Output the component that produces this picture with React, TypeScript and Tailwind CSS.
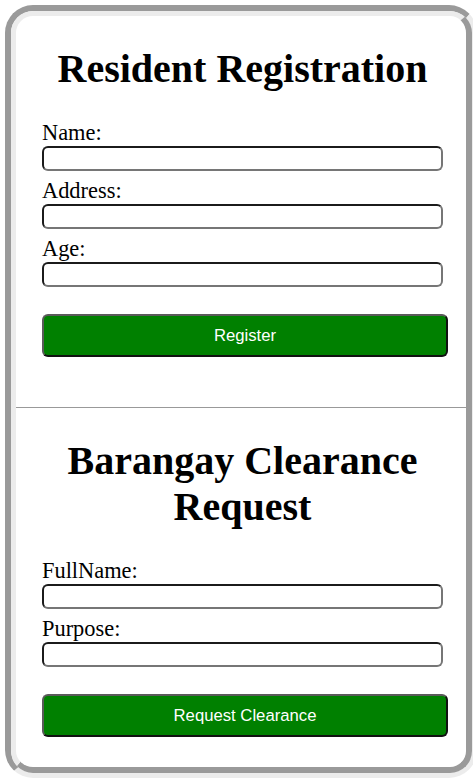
import React from 'react'

const serif = { fontFamily: '"Liberation Serif", "Times New Roman", serif' }

function Field({ label }: { label: string }) {
  return (
    <div className="flex flex-col">
      <label className="text-[22.4px] leading-[24px] text-black">{label}</label>
      <input
        type="text"
        className="mt-[1px] h-[25px] w-full rounded-[6px] border-2 border-t-[#1b1b1b] border-l-[#1b1b1b] border-b-[#767676] border-r-[#767676] bg-white outline-none"
      />
    </div>
  )
}

function SubmitButton({ children }: { children: React.ReactNode }) {
  return (
    <button
      type="button"
      className="mt-[27px] h-[43px] w-[406px] rounded-[6px] border-2 border-t-[#5a5a5a] border-l-[#5a5a5a] border-b-[#111] border-r-[#111] bg-[#008000] text-[16.7px] text-white font-['Liberation_Sans',Arial,sans-serif]"
    >
      {children}
    </button>
  )
}

export default function App() {
  return (
    <div className="h-[778px] w-[473px] overflow-hidden bg-white pl-[5px] pt-[5px]" style={serif}>
      {/* groove-style frame */}
      <div className="w-[472px] rounded-[28px] border-t-[6px] border-l-[6px] border-b-[5px] border-r-[5px] border-t-[#9a9a9a] border-l-[#9a9a9a] border-b-[#ececec] border-r-[#ececec]">
        <div className="rounded-[22px] border-t-[5px] border-l-[5px] border-b-[6px] border-r-[6px] border-t-[#ececec] border-l-[#ececec] border-b-[#9a9a9a] border-r-[#9a9a9a] bg-white">
          {/* Resident Registration */}
          <section className="pl-[26px] pr-[23px] pt-[30px] pb-[50px]">
            <h1 className="text-center text-[40px] leading-[46px] font-bold text-black">Resident Registration</h1>
            <form className="mt-[29px] flex flex-col gap-[8px]">
              <Field label="Name:" />
              <Field label="Address:" />
              <Field label="Age:" />
            </form>
            <SubmitButton>Register</SubmitButton>
          </section>

          {/* Barangay Clearance */}
          <section className="border-t border-[#999] pl-[26px] pr-[23px] pt-[30px] pb-[30px]">
            <h2 className="text-center text-[40px] leading-[46px] font-bold text-black">Barangay Clearance Request</h2>
            <form className="mt-[29px] flex flex-col gap-[8px]">
              <Field label="FullName:" />
              <Field label="Purpose:" />
            </form>
            <SubmitButton>Request Clearance</SubmitButton>
          </section>
        </div>
      </div>
    </div>
  )
}
